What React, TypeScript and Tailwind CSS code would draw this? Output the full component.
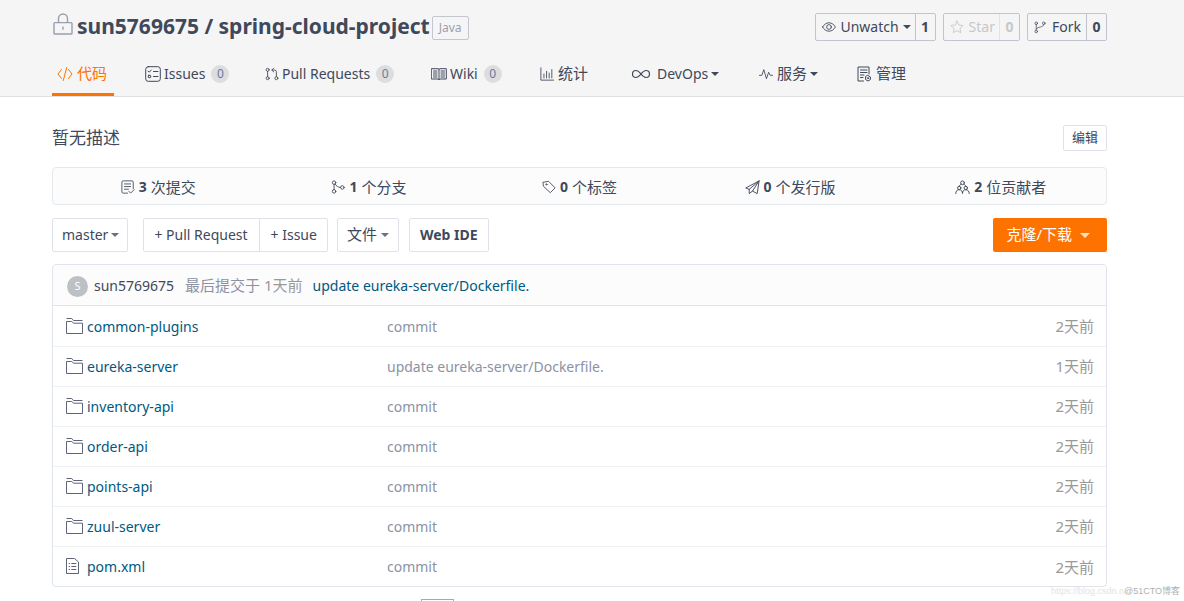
import React from "react";

interface IconProps {
    className?: string;
    children?: React.ReactNode;
}

// All the line icons share a 16 unit grid
function Icon({ className = "w-4 h-4", children }: IconProps) {
    return (
        <svg
            className={`shrink-0 ${className}`}
            viewBox="0 0 16 16"
            fill="none"
            stroke="currentColor"
            strokeWidth={1}
            strokeLinecap="round"
            strokeLinejoin="round"
            aria-hidden="true"
        >
            {children}
        </svg>
    );
}

function Caret({ className = "w-2 h-1" }: { className?: string }) {
    return (
        <svg className={`shrink-0 ${className}`} viewBox="0 0 8 4" fill="currentColor" aria-hidden="true">
            <path d="M0 0h8L4 4z" />
        </svg>
    );
}

function LockIcon() {
    return (
        <svg className="w-5 h-[22px] shrink-0 text-[#9b9fae]" viewBox="0 0 20 22" fill="none" stroke="currentColor" strokeWidth={1.4} aria-hidden="true">
            <rect x="1" y="9.6" width="18" height="11.4" rx="0.8" />
            <path d="M5.500 9.600V5.500a4.500 4.500 0 0 1 9 0v4.100M10 13.400v3.400" />
        </svg>
    );
}

const CodeIcon = () => (
    <Icon>
        <path d="M4.500 3.500 1 8l3.500 4.500M11.500 3.500 15 8l-3.500 4.500M9.700 1.500 6.300 14.500" />
    </Icon>
);

const IssuesIcon = () => (
    <Icon>
        <rect x="0.700" y="0.700" width="14.600" height="14.600" rx="2.500" />
        <path d="m3 5 1.200 1.200L6.300 4M8.500 5.500H13M8.500 10.500H13" />
        <rect x="3.300" y="9.300" width="2.400" height="2.400" rx="0.500" />
    </Icon>
);

const PullIcon = () => (
    <Icon className="w-3.5 h-4">
        <circle cx="3" cy="3.200" r="1.700" />
        <circle cx="3" cy="12.800" r="1.700" />
        <circle cx="13" cy="12.800" r="1.700" />
        <path d="M3 5v6M13 11V5.500a2 2 0 0 0-2-2H8M10 1.300 7.800 3.500 10 5.700" />
    </Icon>
);

const WikiIcon = () => (
    <Icon>
        <path d="M.7 2.700h6.300l1 .6 1-.6h6.300v10.300H9l-1 .6-1-.6H.7zM8 3.300v10M2.500 5h3.500M2.500 7h3.500M2.500 9h3.500M2.500 11h3.500M10 5h3.500M10 7h3.500M10 9h3.500M10 11h3.500" />
    </Icon>
);

const StatsIcon = () => (
    <Icon className="w-3.5 h-3.5">
        <path d="M1 1v14h14.500M4.500 12.500V8M7.500 12.500V5M10.500 12.500V7M13.500 12.500V3" />
    </Icon>
);

const InfinityIcon = () => (
    <svg className="w-5 h-3 mr-[3px] shrink-0" viewBox="0 0 20 12" fill="none" stroke="currentColor" strokeWidth={1.200} aria-hidden="true">
        <path d="M10 6C8 3.500 6.800 2.500 5 2.500a3.500 3.500 0 0 0 0 7c1.800 0 3-1 5-3.500s3.200-3.500 5-3.500a3.500 3.500 0 0 1 0 7c-1.800 0-3-1-5-3.500z" />
    </svg>
);

const PulseIcon = () => (
    <Icon className="w-3.5 h-3.5">
        <path d="M.5 9.500h2.700L5.500 3l3 10.500L11 6l1.800 3.500h2.700" />
    </Icon>
);

const ManageIcon = () => (
    <Icon>
        <path d="M7.500 15H2V1h11v7M4.500 4H11M4.500 6.500H11M4.500 9H8M4.500 11.500H7" />
        <path d="m12 9.500 2.400 1.400v2.700L12 15l-2.400-1.400v-2.700z" />
        <circle cx="12" cy="12.200" r="0.600" />
    </Icon>
);

const EyeIcon = () => (
    <Icon className="w-3.5 h-3.5">
        <path d="M.7 8C2.300 5 4.900 3.200 8 3.200S13.700 5 15.300 8C13.700 11 11.100 12.800 8 12.800S2.300 11 .7 8z" />
        <circle cx="8" cy="8" r="2.700" />
    </Icon>
);

const StarIcon = () => (
    <Icon className="w-3.5 h-3.5">
        <path d="m8 1.200 2.100 4.500 4.900.6-3.600 3.400.9 4.900L8 12.200l-4.300 2.400.9-4.900L1 6.300l4.900-.6z" />
    </Icon>
);

const ForkIcon = () => (
    <Icon className="w-3 h-3.5">
        <circle cx="3" cy="3" r="1.700" />
        <circle cx="3" cy="14" r="1.700" />
        <circle cx="13" cy="3" r="1.700" />
        <path d="M3 4.700v7.600M13 4.700c0 4.300-8 2.300-10 6" />
    </Icon>
);

const CommitIcon = () => (
    <Icon className="w-3.5 h-4">
        <path d="M7.500 15H2.500A1.500 1.500 0 0 1 1 13.500V2.500A1.500 1.500 0 0 1 2.500 1h10A1.500 1.500 0 0 1 14 2.500V10M4 4.500h7M4 7.500h7M4 10.500h4.500M9 13l2 2 4-4" />
    </Icon>
);

const BranchIcon = () => (
    <Icon className="w-3.5 h-3.5">
        <circle cx="3.500" cy="3" r="2" />
        <circle cx="3.500" cy="13" r="2" />
        <circle cx="13" cy="8.500" r="2" />
        <path d="M3.500 5v6M4.700 4.600C6 7 8 8.500 11 8.500" />
    </Icon>
);

const TagIcon = () => (
    <Icon className="w-3.5 h-3.5">
        <path d="M1.500 2.500 7.500 1.500 15 9l-5.500 5.500L2 7.500z" />
        <circle cx="5" cy="5" r="0.700" />
    </Icon>
);

const ReleaseIcon = () => (
    <Icon className="w-[15px] h-[15px]">
        <path d="M15 1 .8 8.500 4.500 10 15 1l-2 13.500-5-2.700L15 1M4.500 10v4.500L8 11.800" />
    </Icon>
);

const PeopleIcon = () => (
    <Icon className="w-[15px] h-[15px]">
        <circle cx="8" cy="3" r="2" />
        <circle cx="4.500" cy="8.500" r="1.800" />
        <circle cx="11.500" cy="8.500" r="1.800" />
        <path d="M6.500 4.500C5.300 5.100 4.500 6 4.500 6.700M9.500 4.500c1.200.6 2 1.500 2 2.200M.8 14.500c0-2.500 1.500-4.200 3.700-4.200S8 12 8 14.500c0-2.500 1.300-4.200 3.500-4.200s3.700 1.700 3.700 4.200" />
    </Icon>
);

const FolderIcon = () => (
    <svg className="w-[17px] h-4 shrink-0" viewBox="0 0 17 16" fill="none" stroke="currentColor" strokeWidth={1} strokeLinejoin="round" aria-hidden="true">
        <path d="M.5.500h5.200l1.800 2h9M.5 15.500V3.500h5.200l2 1.700h8.800v10.300z" />
    </svg>
);

const FileIcon = () => (
    <svg className="w-[13px] h-4 shrink-0" viewBox="0 0 13 16" fill="none" stroke="currentColor" strokeWidth={1} strokeLinejoin="round" aria-hidden="true">
        <path d="M.5.500h8L12.500 4v11.500H.5zM2.700 5.500h1.300M2.700 8.500h1.300M2.700 11.500h1.300M5.300 5.500h5M5.300 8.500h5M5.300 11.500h5" />
    </svg>
);

const tabs = [
    { label: "代码", icon: <CodeIcon />, cjk: true, active: true, width: "w-[62px]" },
    { label: "Issues", icon: <IssuesIcon />, count: 0, width: "w-[94px]" },
    { label: "Pull Requests", icon: <PullIcon />, count: 0, width: "w-[140px]" },
    { label: "Wiki", icon: <WikiIcon />, count: 0, width: "w-[83px]" },
    { label: "统计", icon: <StatsIcon />, cjk: true, width: "w-[65px]" },
    { label: "DevOps", icon: <InfinityIcon />, menu: true, width: "w-[102px]" },
    { label: "服务", icon: <PulseIcon />, cjk: true, menu: true, width: "w-[71px]" },
    { label: "管理", icon: <ManageIcon />, cjk: true, width: "w-[62px]" },
];

const stats = [
    { count: 3, label: "次提交", icon: <CommitIcon /> },
    { count: 1, label: "个分支", icon: <BranchIcon /> },
    { count: 0, label: "个标签", icon: <TagIcon /> },
    { count: 0, label: "个发行版", icon: <ReleaseIcon /> },
    { count: 2, label: "位贡献者", icon: <PeopleIcon /> },
];

const files = [
    { name: "common-plugins", message: "commit", time: "2天前" },
    { name: "eureka-server", message: "update eureka-server/Dockerfile.", time: "1天前" },
    { name: "inventory-api", message: "commit", time: "2天前" },
    { name: "order-api", message: "commit", time: "2天前" },
    { name: "points-api", message: "commit", time: "2天前" },
    { name: "zuul-server", message: "commit", time: "2天前" },
    { name: "pom.xml", message: "commit", time: "2天前", isFile: true },
];

function RepoHeader() {
    return (
        <header className="bg-[#f5f5f5] border-b border-[#e0e0e1] pl-[52px] pr-[77px]">
            <div className="flex items-center justify-between h-[52px]">
                <div className="flex items-center">
                    <span className="mr-1 ml-px pb-1"><LockIcon /></span>
                    <h1 className="text-[21px] leading-7 font-bold text-[#40485b] whitespace-nowrap">
                        <a href="#owner">sun5769675</a> / <a href="#repo">spring-cloud-project</a>
                    </h1>
                    <a href="#java" className="ml-[2px] mt-[3px] px-[6px] h-6 flex items-center border border-[#c3c6d0] rounded-xs text-[12px] text-[#9b9fae]">
                        Java
                    </a>
                </div>
                <div className="flex gap-[7px] pt-px text-sm">
                    <div className="flex h-7 border border-[#c0c4cf] rounded-xs">
                        <button type="button" className="flex items-center pl-[6px] pr-1">
                            <EyeIcon />
                            <span className="mx-1">Unwatch</span>
                            <Caret />
                        </button>
                        <a href="#watchers" className="flex items-center justify-center w-5 border-l border-[#c0c4cf] font-bold">1</a>
                    </div>
                    <div className="flex h-7 border border-[#c0c4cf] rounded-xs text-[#c6c7c9]">
                        <button type="button" disabled className="flex items-center pl-[6px] pr-1">
                            <StarIcon />
                            <span className="ml-[5px]">Star</span>
                        </button>
                        <a href="#stars" className="flex items-center justify-center w-5 border-l border-[#e2e3e6] font-bold">0</a>
                    </div>
                    <div className="flex h-7 border border-[#c0c4cf] rounded-xs">
                        <button type="button" className="flex items-center pl-[6px] pr-[5px]">
                            <ForkIcon />
                            <span className="ml-[6px]">Fork</span>
                        </button>
                        <a href="#forks" className="flex items-center justify-center w-5 border-l border-[#c0c4cf] font-bold">0</a>
                    </div>
                </div>
            </div>
            <nav className="flex gap-[26px] h-11 text-sm">
                {tabs.map((tab) => (
                    <a
                        key={tab.label}
                        href={`#${tab.label}`}
                        className={`flex items-center gap-[3px] pl-[5px] pt-[2px] border-b-3 whitespace-nowrap ${tab.width} ${tab.active ? "border-[#fe7300] text-[#fe7300]" : "border-transparent"}`}
                    >
                        {tab.icon}
                        <span className={tab.cjk ? "text-[15px] pl-px" : ""}>{tab.label}</span>
                        {tab.count !== undefined && (
                            <span className="ml-[3px] w-[18px] h-[18px] rounded-full bg-[#dcddde] text-[#6b7a99] text-[12px] flex items-center justify-center">
                                {tab.count}
                            </span>
                        )}
                        {tab.menu && <Caret />}
                    </a>
                ))}
            </nav>
        </header>
    );
}

function ActionBar() {
    return (
        <div className="flex items-center mt-[13px] h-[34px] text-sm">
            <button type="button" className="flex items-center gap-[3px] h-full pl-[9px] pr-2 border border-[#dfe3e9] rounded-xs">
                master
                <Caret className="w-2 h-1 text-[#6a7080]" />
            </button>
            <div className="flex h-full ml-[15px] border border-[#dfe3e9] rounded-xs">
                <button type="button" className="pl-[10px] pr-[11px]">+ Pull Request</button>
                <button type="button" className="pl-[11px] pr-[10px] border-l border-[#dfe3e9]">+ Issue</button>
            </div>
            <button type="button" className="flex items-center gap-1 h-full ml-[9px] px-[9px] border border-[#dfe3e9] rounded-xs text-[15px]">
                文件
                <Caret className="w-2 h-1 text-[#6a7080]" />
            </button>
            <button type="button" className="h-full ml-[10px] px-[10px] border border-[#dfe3e9] rounded-xs font-bold">
                Web IDE
            </button>
            <button type="button" className="flex items-center gap-2 h-full ml-auto pl-[13px] pr-[17px] rounded-xs bg-[#fe7300] text-white text-[15px]">
                克隆/下载
                <Caret className="w-[10px] h-[5px] text-[#ffe0c6]" />
            </button>
        </div>
    );
}

function FileList() {
    return (
        <section className="mt-3 border border-[#dfe5ea] rounded">
            <div className="flex items-center h-[41px] px-[14px] pt-[2px] bg-[#fcfcfc] border-b border-[#dfe5ea] rounded-t text-sm whitespace-nowrap">
                <span className="w-[21px] h-[21px] mr-[6px] rounded-full bg-[#bdc1c6] text-white text-[11px] flex items-center justify-center">S</span>
                <a href="#owner">sun5769675</a>
                <span className="ml-[11px] text-[15px] text-[#8c92a4]">
                    最后提交于 <span className="text-[#999]">1天前</span>
                </span>
                <a href="#last-commit" className="ml-[10px] text-[#005980]">update eureka-server/Dockerfile.</a>
            </div>
            <table className="w-full table-fixed text-sm">
                <tbody>
                    {files.map((file) => (
                        <tr key={file.name} className="h-10 border-b border-[#eff1f4] last:border-b-0">
                            <td className="w-[334px] pl-[13px] pt-[2px]">
                                <a href={`#${file.name}`} className="flex items-center text-[#005980]">
                                    <span className="w-[21px] pb-[2px] text-[#5d6475]">{file.isFile ? <FileIcon /> : <FolderIcon />}</span>
                                    {file.name}
                                </a>
                            </td>
                            <td className="pt-[2px] text-[#8c92a4]">{file.message}</td>
                            <td className="w-24 pr-3 pt-[2px] text-right text-[15px] text-[#999]">{file.time}</td>
                        </tr>
                    ))}
                </tbody>
            </table>
        </section>
    );
}

export default function App() {
    return (
        <div className="relative h-screen overflow-hidden bg-white text-[#40485b] font-['Noto_Sans','Noto_Sans_CJK_SC',sans-serif]">
            <RepoHeader />
            <main className="pl-[52px] pr-[77px] pt-7">
                <div className="flex items-center justify-between">
                    <p className="text-[17px] leading-6">暂无描述</p>
                    <button type="button" className="h-[26px] px-2 border border-[#dfe3e9] rounded-xs text-[13px]">编辑</button>
                </div>
                <div className="flex mt-4 h-[38px] pt-[2px] bg-[#fcfcfc] border border-[#e3e9ed] rounded">
                    {stats.map((stat) => (
                        <a key={stat.label} href={`#${stat.label}`} className="flex-1 flex items-center justify-center gap-1 text-[15px]">
                            {stat.icon}
                            <b className="text-sm">{stat.count}</b>
                            {stat.label}
                        </a>
                    ))}
                </div>
                <ActionBar />
                <FileList />
                <div className="mt-3 ml-[369px] w-[33px] h-5 border border-[#aaa]" />
            </main>
            <div className="absolute right-1 bottom-0 flex text-[9px] leading-5 whitespace-nowrap font-['Liberation_Sans','Noto_Sans_CJK_SC',sans-serif]">
                <span className="text-[#e3e3e3]">https://blog.csdn.n</span>
                <span className="text-[#b0b0b0]">@51CTO博客</span>
            </div>
        </div>
    );
}
